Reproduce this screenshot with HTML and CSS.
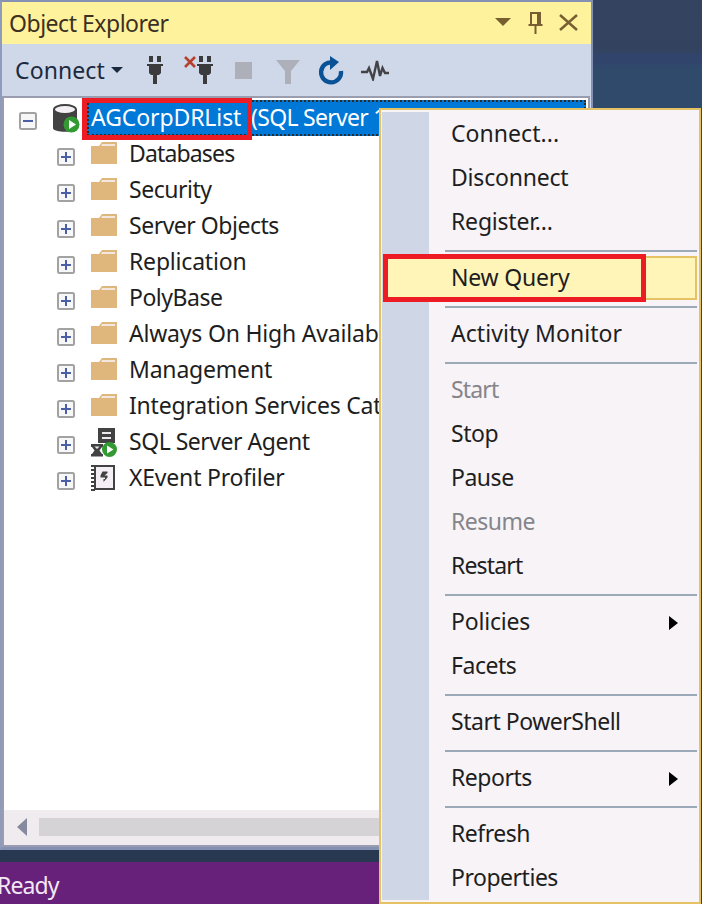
FILE: index.html
```
<!DOCTYPE html>
<html lang="en">
<head>
<meta charset="utf-8">
<title>Object Explorer</title>
<link rel="stylesheet" href="styles.css">
</head>
<body>
<svg class="defs" width="0" height="0" aria-hidden="true">
  <symbol id="plus" viewBox="0 0 18 18"><rect x="1" y="1" width="16" height="16" rx="1.5" fill="#f7f7f7" stroke="#a2a2a2" stroke-width="2"/><path d="M4 9h10M9 4v10" stroke="#4a5fa5" stroke-width="2"/></symbol>
  <symbol id="minus" viewBox="0 0 18 18"><rect x="1" y="1" width="16" height="16" rx="1.5" fill="#f7f7f7" stroke="#a2a2a2" stroke-width="2"/><path d="M4 9h10" stroke="#4a5fa5" stroke-width="2"/></symbol>
  <symbol id="folder" viewBox="0 0 28 24"><path d="M1 5h8l3-4h15v22H1z" fill="#dfb67c"/><path d="M11 5l1-2h13v2z" fill="#f3e7df"/></symbol>
  <symbol id="plug" viewBox="0 0 18 28"><path d="M3 0h4v6H3zM11 0h4v6h-4zM1 8h16v2h-2v7l-2 2h-2v9H7v-9H5l-2-2v-7H1z" fill="#3b3b3d"/></symbol>
</svg>
<main class="desktop">
  <section class="panel">
    <header class="titlebar">
      <h1 class="title">Object Explorer</h1>
      <svg class="window-icons" width="86" height="24" viewBox="0 0 86 24">
        <path d="M0 7h16l-8 8z" fill="#775f32"/>
        <path d="M36 14V2h9v12M33.500 14h14M40.500 14v9" fill="none" stroke="#775f32" stroke-width="2"/><path d="M42 2h3v12h-3z" fill="#775f32"/>
        <path d="M65 4l17 15M82 4L65 19" fill="none" stroke="#775f32" stroke-width="2.500"/>
      </svg>
    </header>
    <div class="toolbar">
      <span class="connect">Connect</span>
      <svg class="caret" width="12" height="6" viewBox="0 0 12 6"><path d="M0 0h12L6 6z" fill="#1b293e"/></svg>
      <svg class="plug" width="18" height="28"><use href="#plug"/></svg>
      <svg class="unplug" width="30" height="28" viewBox="0 0 30 28"><path d="M1 1l10 10M11 1L1 11" stroke="#b5402d" stroke-width="2.600"/><use href="#plug" x="12" width="18" height="28"/></svg>
      <svg class="stop" width="17" height="17"><rect width="17" height="17" fill="#adb0b9"/></svg>
      <svg class="filter" width="24" height="24" viewBox="0 0 24 24"><path d="M0 0h24l-9 11v13H9V11z" fill="#adb0b9"/></svg>
      <svg class="reload" width="26" height="29" viewBox="0 0 26 29"><path d="M15 6.500A10 10 0 1 0 23 15" fill="none" stroke="#0a5296" stroke-width="4.300"/><path d="M12 0l9 6-9 8z" fill="#0a5296"/></svg>
      <svg class="activity" width="28" height="22" viewBox="0 0 28 22"><path d="M0 13h6l2-4 4 11L16 2l3 15 2.500-8 2.500 5h4" fill="none" stroke="#424247" stroke-width="2.400"/></svg>
    </div>
    <div class="tree">
      <div class="row root">
        <svg class="toggle" width="18" height="18"><use href="#minus"/></svg>
        <svg class="server" width="28" height="30" viewBox="0 0 28 30"><path d="M1 6v19c0 5 24 5 24 0V6z" fill="#424242"/><ellipse cx="13" cy="6.500" rx="11" ry="4.500" fill="#f4eff4" stroke="#424242" stroke-width="2"/><circle cx="19.500" cy="21.500" r="8" fill="#339933"/><path d="M17 17l7 4.500-7 4.500z" fill="#fff"/></svg>
        <div class="selection"><span class="server-name">AGCorpDRList</span><span class="server-version">(SQL Server 1</span></div>
      </div>
      <div class="row"><svg class="toggle" width="18" height="18"><use href="#plus"/></svg><svg class="icon" width="28" height="24"><use href="#folder"/></svg><span class="narrow">Databases</span></div>
      <div class="row"><svg class="toggle" width="18" height="18"><use href="#plus"/></svg><svg class="icon" width="28" height="24"><use href="#folder"/></svg><span>Security</span></div>
      <div class="row"><svg class="toggle" width="18" height="18"><use href="#plus"/></svg><svg class="icon" width="28" height="24"><use href="#folder"/></svg><span>Server Objects</span></div>
      <div class="row"><svg class="toggle" width="18" height="18"><use href="#plus"/></svg><svg class="icon" width="28" height="24"><use href="#folder"/></svg><span class="loose">Replication</span></div>
      <div class="row"><svg class="toggle" width="18" height="18"><use href="#plus"/></svg><svg class="icon" width="28" height="24"><use href="#folder"/></svg><span>PolyBase</span></div>
      <div class="row"><svg class="toggle" width="18" height="18"><use href="#plus"/></svg><svg class="icon" width="28" height="24"><use href="#folder"/></svg><span class="loose">Always On High Availability</span></div>
      <div class="row"><svg class="toggle" width="18" height="18"><use href="#plus"/></svg><svg class="icon" width="28" height="24"><use href="#folder"/></svg><span class="loose">Management</span></div>
      <div class="row"><svg class="toggle" width="18" height="18"><use href="#plus"/></svg><svg class="icon" width="28" height="24"><use href="#folder"/></svg><span class="loose">Integration Services Catalogs</span></div>
      <div class="row"><svg class="toggle" width="18" height="18"><use href="#plus"/></svg>
        <svg class="icon agent" width="28" height="29" viewBox="0 0 28 29"><path d="M8 0h17v15H8z" fill="#424242"/><path d="M12 5h9M12 10h9" stroke="#eee9ee" stroke-width="2"/><path d="M1 16h12v3h-1l-2.500 3.500L12 26h1v2.500H1V26h1l2.500-3.500L2 19H1z" fill="#424242"/><path d="M4.500 18.500h5L7 21z" fill="#eee9ee"/><circle cx="19.500" cy="21.500" r="7.500" fill="#339933"/><path d="M17 17.500l6.500 4-6.500 4z" fill="#fff"/></svg>
        <span>SQL Server Agent</span></div>
      <div class="row"><svg class="toggle" width="18" height="18"><use href="#plus"/></svg>
        <svg class="icon profiler" width="28" height="28" viewBox="0 0 28 28"><path d="M5 2h19v23H5z" fill="#f4eff4" stroke="#424242" stroke-width="2"/><path d="M3 1v26" stroke="#424242" stroke-width="4" stroke-dasharray="2 2"/><path d="M12.500 7.500h5v1.500l-3 2.500h3v2l-4 4.500v-3h1.500v-1.500h-4.500v-2z" fill="#424242"/></svg>
        <span class="loose">XEvent Profiler</span></div>
    </div>
    <div class="scrollbar">
      <svg width="10" height="18" viewBox="0 0 10 18"><path d="M10 0v18L0 9z" fill="#858a9e"/></svg>
      <div class="thumb"></div>
    </div>
  </section>
  <footer class="status">Ready</footer>
</main>
<nav class="menu">
  <div class="item wide">Connect...</div>
  <div class="item loose">Disconnect</div>
  <div class="item loose">Register...</div>
  <hr>
  <div class="item active loose">New Query</div>
  <hr>
  <div class="item wide">Activity Monitor</div>
  <hr>
  <div class="item disabled narrow">Start</div>
  <div class="item">Stop</div>
  <div class="item">Pause</div>
  <div class="item disabled">Resume</div>
  <div class="item narrow">Restart</div>
  <hr>
  <div class="item loose">Policies<svg width="9" height="14" viewBox="0 0 9 14"><path d="M0 0l9 7-9 7z"/></svg></div>
  <div class="item">Facets</div>
  <hr>
  <div class="item">Start PowerShell</div>
  <hr>
  <div class="item">Reports<svg width="9" height="14" viewBox="0 0 9 14"><path d="M0 0l9 7-9 7z"/></svg></div>
  <hr>
  <div class="item">Refresh</div>
  <div class="item">Properties</div>
</nav>
<div class="callout callout-server"></div>
<div class="callout callout-query"></div>
</body>
</html>
```
FILE: styles.css
```
* { box-sizing: border-box; }
body {
  margin: 0;
  width: 702px;
  height: 904px;
  overflow: hidden;
  position: relative;
  font: 23px/34px "Noto Sans", "Open Sans", sans-serif;
  letter-spacing: -0.48px;
  color: #1e1e1e;
  white-space: nowrap;
}
.wide { letter-spacing: 0.05px; }
.loose { letter-spacing: -0.2px; }
.narrow { letter-spacing: -0.85px; }
svg { display: block; flex: none; }
.defs { position: absolute; }
.desktop {
  height: 904px;
  display: flex;
  flex-direction: column;
  background: linear-gradient(#34435f 0, #33435f 50px, #31446c 56px, #31446c 62px, #304a6b 68px, #304a6b 110px, #283850 850px);
}
.panel {
  width: 593px;
  height: 850px;
  display: flex;
  flex-direction: column;
  border: 2px solid #8591b2;
  border-left-color: #8e9bbc;
  border-bottom-width: 3px;
  background: #cfd8e8;
}
.titlebar {
  height: 42px;
  display: flex;
  align-items: center;
  padding: 0 10px 0 7px;
  justify-content: space-between;
  background: #fff29d;
}
.title { margin: 0; font: inherit; color: #3b3022; }
.window-icons { margin-top: -1px; }
.toolbar {
  height: 52px;
  display: flex;
  align-items: center;
  padding-left: 13px;
  color: #1b293e;
}
.connect { width: 94px; letter-spacing: 0.1px; }
.caret { margin-left: 2px; }
.plug { margin-left: 23px; }
.unplug { margin-left: 20px; }
.stop { margin-left: 21px; }
.filter { margin: 3px 0 0 24px; }
.reload { margin: 1px 0 0 18px; }
.activity { margin-left: 17px; }
.tree {
  flex: 1;
  border: 2px solid #9a9daf;
  border-bottom: 0;
  background: #fff;
  padding-top: 2px;
  margin-right: 1px;
}
.row { display: flex; height: 36px; align-items: center; padding-left: 53px; }
.row span { margin-top: -2px; }
.toggle { margin-top: 5px; }
.icon { margin: -3px 11px 0 15px; }
.agent { margin-top: 1px; }
.profiler { margin-top: -1px; }
.root { padding-left: 15px; }
.server { margin-left: 15px; }
.selection {
  flex: 1;
  height: 36px;
  margin: 0 2px 0 7px;
  padding-left: 2px;
  display: flex;
  align-items: center;
  background: #0078d7;
  border: 2px dotted #302b27;
  color: #fff;
}
.server-name { width: 160px; letter-spacing: -0.1px; }
.server-version { letter-spacing: -0.7px; }
.scrollbar {
  height: 37px;
  display: flex;
  align-items: center;
  gap: 12px;
  padding: 0 0 2px 13px;
  margin-right: 1px;
  background: #efebef;
  border: 2px solid #9a9daf;
  border-top: 0;
}
.thumb { flex: 1; height: 18px; background: #d5d3d6; }
.status {
  margin-top: 12px;
  flex: 1;
  padding: 6px 0 0 1px;
  background: #68217a;
  color: #f3e8f5;
  text-indent: -4px;
  letter-spacing: -0.9px;
}
.menu {
  position: absolute;
  left: 379px;
  top: 108px;
  width: 322px;
  height: 796px;
  padding: 2px 1px;
  border: 2px solid #e5c365;
  background: linear-gradient(90deg, #cfd7e7 47px, #f7f3f7 47px) no-repeat 1px 2px / 316px 788px, #f7f3f7;
}
.item {
  height: 44px;
  display: flex;
  align-items: center;
  justify-content: space-between;
  padding: 0 20px 2px 69px;
}
.item svg { margin-top: 3px; }
.item.active {
  margin: 0 1px;
  padding-left: 66px;
  border: 2px solid #e5c365;
  background: #fff5b8;
}
.disabled { color: #85858a; }
hr {
  height: 2px;
  margin: 6px 1px 4px 63px;
  border: 0;
  background: #9ca9b8;
}
.callout { position: absolute; border: 5px solid #ed1c24; }
.callout-server { left: 82px; top: 98px; width: 170px; height: 42px; }
.callout-query { left: 383px; top: 254px; width: 263px; height: 48px; }
```
